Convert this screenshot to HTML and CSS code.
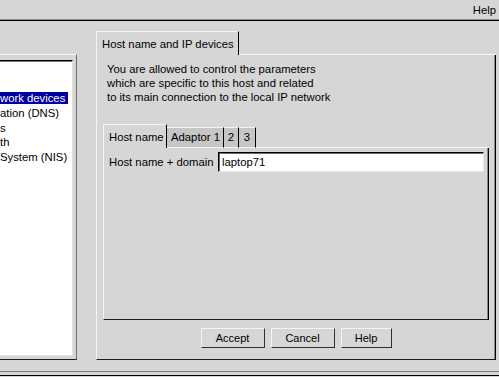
FILE: index.html
```html
<!DOCTYPE html>
<html lang="en">
<head>
    <meta charset="UTF-8">
    <title>Host name and IP devices</title>
    <link rel="stylesheet" href="styles.css">
</head>
<body>
    <div class="menubar">
        <span class="menu-item">Help</span>
    </div>

    <div class="workarea">
        <div class="side">
            <ul class="list">
                <li><span class="selected">work devices</span></li>
                <li>ation (DNS)</li>
                <li>s</li>
                <li>th</li>
                <li>System (NIS)</li>
            </ul>
        </div>

        <div class="main">
            <div class="tabrow">
                <div class="tab">Host name and IP devices</div>
                <div class="tabfill"></div>
            </div>
            <div class="panel">
                <p class="desc">You are allowed to control the parameters<br>which are specific to this host and related<br>to its main connection to the local IP network</p>

                <div class="notebook">
                    <div class="subtabs">
                        <div class="subtab active">Host name</div>
                        <div class="subtab adaptor">Adaptor 1</div>
                        <div class="subtab small">2</div>
                        <div class="subtab small wide">3</div>
                        <div class="tabfill"></div>
                    </div>
                    <div class="subpanel">
                        <div class="row">
                            <label class="label" for="hostname">Host name + domain</label>
                            <input class="field" id="hostname" type="text" value="laptop71">
                        </div>
                    </div>
                </div>

                <div class="buttons">
                    <button class="btn">Accept</button>
                    <button class="btn">Cancel</button>
                    <button class="btn btn-help">Help</button>
                </div>
            </div>
        </div>
    </div>

    <div class="status"></div>
</body>
</html>
```

FILE: styles.css
```css
body {
    margin: 0;
    width: 499px;
    height: 377px;
    overflow: hidden;
    background-color: #d6d6d6;
    color: #000;
    font-family: "Liberation Sans", Arial, sans-serif;
    font-size: 11.3px;
}
.menubar {
    height: 20px;
    border-bottom: 1px solid #000;
    box-shadow: inset 0 -1px 0 #8a8a8a;
    display: flex;
    justify-content: flex-end;
    align-items: center;
    padding-right: 3px;
    line-height: 12px;
}
.menu-item {
    margin-top: -1px;
}
.workarea {
    display: flex;
    gap: 19px;
    height: 339px;
}

/* liste a gauche */
.side {
    box-sizing: border-box;
    width: 77px;
    margin-top: 33px;
    padding: 5px 3px 3px 0;
    border-top: 1px solid #f4f4f4;
    border-right: 1px solid #6e6e6e;
    border-bottom: 1px solid #1c1c1c;
    display: flex;
}
.list {
    flex: 1;
    margin: 0;
    padding: 31px 0 0 0;
    list-style: none;
    background-color: #fff;
    border-top: 1px solid #000;
    border-right: 1px solid #e4e4e4;
    border-bottom: 1px solid #e4e4e4;
    box-shadow: inset 0 1px 0 #7a7a7a;
    overflow: hidden;
    white-space: nowrap;
}
.list li {
    height: 12px;
    line-height: 12px;
    margin-bottom: 2.75px;
}
.selected {
    display: inline-block;
    padding-right: 3px;
    background-color: #0000a0;
    color: #fff;
}

/* panneau principal */
.main {
    box-sizing: border-box;
    width: 400px;
    margin-top: 10px;
    display: flex;
    flex-direction: column;
}
.tabrow {
    display: flex;
    height: 24px;
}
.tab {
    box-sizing: border-box;
    width: 143px;
    height: 24px;
    padding: 5px 0 0 5px;
    border-top: 1px solid #f4f4f4;
    border-left: 1px solid #f4f4f4;
    border-right: 1px solid #000;
    line-height: 14px;
    white-space: nowrap;
    overflow: hidden;
}
.tabfill {
    flex: 1;
    border-bottom: 1px solid #f4f4f4;
}
.panel {
    flex: 1;
    padding: 7px 6px 0 6px;
    border-left: 1px solid #f4f4f4;
    border-right: 1px solid #000;
    border-bottom: 1px solid #1c1c1c;
    box-shadow: inset -1px 0 0 #8a8a8a;
}
.desc {
    margin: 0;
    padding-left: 4px;
    line-height: 14px;
}

/* onglets internes */
.notebook {
    margin-top: 20px;
    height: 196px;
    display: flex;
    flex-direction: column;
}
.subtabs {
    display: flex;
    align-items: flex-end;
    height: 24px;
}
.subtab {
    box-sizing: border-box;
    height: 21px;
    line-height: 18px;
    border-top: 1px solid #f4f4f4;
    border-right: 1px solid #000;
    border-bottom: 1px solid #f4f4f4;
    background-color: #c6c6c6;
    white-space: nowrap;
    overflow: hidden;
}
.subtab.active {
    width: 64px;
    height: 24px;
    padding: 5px 0 0 5px;
    line-height: 14px;
    border-left: 1px solid #f4f4f4;
    border-bottom: none;
    background-color: #d6d6d6;
}
.subtab.adaptor {
    width: 57px;
    padding-left: 4px;
}
.subtab.small {
    width: 15px;
    text-align: center;
}
.subtab.wide {
    width: 17px;
}
.subpanel {
    flex: 1;
    padding: 4px 4px 0 5px;
    border-left: 1px solid #f4f4f4;
    border-right: 1px solid #000;
    border-bottom: 1px solid #1c1c1c;
    box-shadow: inset -1px 0 0 #8a8a8a;
}
.row {
    display: flex;
    align-items: center;
    gap: 8px;
}
.label {
    flex: 0 0 101px;
    min-width: 0;
    white-space: nowrap;
}
.field {
    flex: 1;
    min-width: 0;
    box-sizing: border-box;
    height: 20px;
    margin: 0;
    padding: 0 3px;
    font-family: inherit;
    font-size: 11.3px;
    color: #000;
    background-color: #fff;
    border: 1px solid;
    border-color: #000 #e6e6e6 #e6e6e6 #000;
    box-shadow: inset 1px 1px 0 #6a6a6a;
    outline: none;
}

/* boutons */
.buttons {
    display: flex;
    justify-content: center;
    gap: 6px;
    margin-top: 8px;
}
.btn {
    box-sizing: border-box;
    width: 64px;
    height: 20px;
    padding: 0;
    font-family: inherit;
    font-size: 11px;
    color: #000;
    background-color: #d6d6d6;
    border: 1px solid;
    border-color: #f4f4f4 #303030 #303030 #f4f4f4;
}
.btn-help {
    width: 51px;
}

.status {
    margin-top: 11px;
    height: 3px;
    border-top: 1px solid #7a7a7a;
    border-bottom: 1px solid #000;
}
```
